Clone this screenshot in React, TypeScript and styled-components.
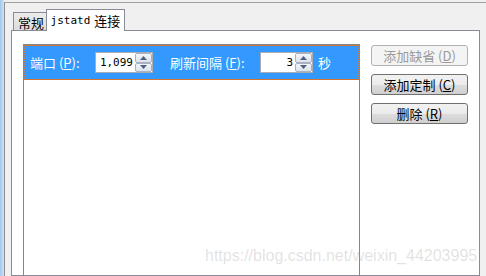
import * as React from 'react';
import styled, { createGlobalStyle } from 'styled-components';

const GlobalStyle = createGlobalStyle`
  html, body {
    margin: 0;
    padding: 0;
    overflow: hidden;
    background: #f0f0f0;
  }
`;

const CJK = `"Noto Sans CJK SC", "Liberation Sans", sans-serif`;
const MONO = `"DejaVu Sans Mono", "Liberation Mono", monospace`;

const Root = styled.div`
  position: relative;
  width: 486px;
  height: 276px;
  overflow: hidden;
  display: flex;
  background: #f0f0f0;
  font-family: ${CJK};
`;

const WindowEdge = styled.div`
  width: 4px;
  background: linear-gradient(to right, #a6c6ea, #cfe1f5);
`;

const Frame = styled.div`
  flex: 1;
  margin-top: 2px;
  border-top: 1px solid #a0a0a0;
  border-left: 1px solid #8e8f92;
  display: flex;
  flex-direction: column;
  padding: 0 6px;
`;

const TabStrip = styled.div`
  display: flex;
  align-items: flex-end;
  padding: 6px 0 0 2px;
  position: relative;
  z-index: 1;
`;

const Tab = styled.div<{ $active?: boolean }>`
  box-sizing: border-box;
  display: flex;
  align-items: center;
  justify-content: center;
  gap: 4px;
  border: 1px solid #898c95;
  border-bottom: none;
  color: #000;
  font-size: 13px;
  height: ${p => (p.$active ? 22 : 18)}px;
  width: ${p => (p.$active ? 79 : 36)}px;
  margin-left: ${p => (p.$active ? -3 : 0)}px;
  margin-bottom: ${p => (p.$active ? -1 : 0)}px;
  background: ${p => (p.$active ? '#ffffff' : 'linear-gradient(#ececec, #dcdcdc)')};
  padding-top: ${p => (p.$active ? 0 : 1)}px;
`;

const TabMono = styled.span`
  font-family: ${MONO};
  font-size: 11px;
`;

const Panel = styled.div`
  flex: 1;
  display: flex;
  gap: 11px;
  border: 1px solid #898c95;
  background: #ffffff;
  padding: 13px 11px 0 11px;
`;

const List = styled.div`
  flex: 1;
  border: 1px solid #828790;
  border-bottom: none;
  background: #ffffff;
`;

const Header = styled.div`
  height: 35px;
  box-sizing: border-box;
  display: flex;
  align-items: center;
  padding-left: 5px;
  background: #3399ff;
  border: 1px dotted #d9782e;
  color: #ffffff;
  font-size: 13px;
`;

const Field = styled.div<{ $space?: number }>`
  display: flex;
  align-items: center;
  margin-left: ${p => p.$space ?? 0}px;
`;

const Label = styled.span<{ $w: number }>`
  width: ${p => p.$w}px;
  white-space: nowrap;
`;

const Unit = styled.span`
  margin-left: 5px;
`;

const Key = styled.span`
  text-decoration: underline;
`;

const SpinBox = styled.div<{ $w: number }>`
  box-sizing: border-box;
  width: ${p => p.$w}px;
  height: 21px;
  display: flex;
  border: 1px solid #abadb3;
  background: #ffffff;
`;

const SpinValue = styled.span`
  flex: 1;
  text-align: right;
  padding-right: 2px;
  font-family: ${MONO};
  font-size: 11px;
  line-height: 19px;
  color: #000;
`;

const SpinButtons = styled.div`
  width: 17px;
  display: flex;
  flex-direction: column;
`;

const SpinButton = styled.div`
  flex: 1;
  box-sizing: border-box;
  border: 1px solid #a8b2c2;
  border-radius: 2px;
  background: linear-gradient(#f4f6f9, #dde3eb);
  display: flex;
  align-items: center;
  justify-content: center;
`;

const Side = styled.div`
  width: 97px;
  display: flex;
  flex-direction: column;
  gap: 8px;
  padding-top: 1px;
`;

const ActionButton = styled.button`
  box-sizing: border-box;
  width: 97px;
  height: 21px;
  padding: 0;
  border: 1px solid #707070;
  border-radius: 3px;
  background: linear-gradient(#f2f2f2 0%, #ebebeb 50%, #dddddd 51%, #cfcfcf 100%);
  font-family: ${CJK};
  font-size: 13px;
  color: #000;
  line-height: 19px;

  &:disabled {
    border-color: #adb2b5;
    background: #f4f4f4;
    color: #9a9a9a;
  }
`;

const Watermark = styled.div`
  position: absolute;
  left: 205px;
  top: 247px;
  font-family: "Liberation Sans", Arial, sans-serif;
  font-size: 16px;
  color: rgba(150, 150, 150, 0.28);
  pointer-events: none;
`;

const Arrow = ({ up }: { up?: boolean }) => (
  <svg width="7" height="4" viewBox="0 0 7 4">
    <path d={up ? 'M0 4 L3.5 0 L7 4 Z' : 'M0 0 L3.5 4 L7 0 Z'} fill="#4d6185" />
  </svg>
);

const Spinner = ({ value, width }: { value: string; width: number }) => (
  <SpinBox $w={width}>
    <SpinValue>{value}</SpinValue>
    <SpinButtons>
      <SpinButton><Arrow up /></SpinButton>
      <SpinButton><Arrow /></SpinButton>
    </SpinButtons>
  </SpinBox>
);

const App = () => (
  <Root>
    <GlobalStyle />
    <WindowEdge />
    <Frame>
      <TabStrip>
        <Tab>常规</Tab>
        <Tab $active>
          <TabMono>jstatd</TabMono>连接
        </Tab>
      </TabStrip>
      <Panel>
        <List>
          <Header>
            <Field>
              <Label $w={65}>端口 (<Key>P</Key>):</Label>
              <Spinner value="1,099" width={58} />
            </Field>
            <Field $space={17}>
              <Label $w={90}>刷新间隔 (<Key>F</Key>):</Label>
              <Spinner value="3" width={53} />
            </Field>
            <Unit>秒</Unit>
          </Header>
        </List>
        <Side>
          <ActionButton disabled>添加缺省 (<Key>D</Key>)</ActionButton>
          <ActionButton>添加定制 (<Key>C</Key>)</ActionButton>
          <ActionButton>删除 (<Key>R</Key>)</ActionButton>
        </Side>
      </Panel>
    </Frame>
    <Watermark>https://blog.csdn.net/weixin_44203995</Watermark>
  </Root>
);

export default App;
